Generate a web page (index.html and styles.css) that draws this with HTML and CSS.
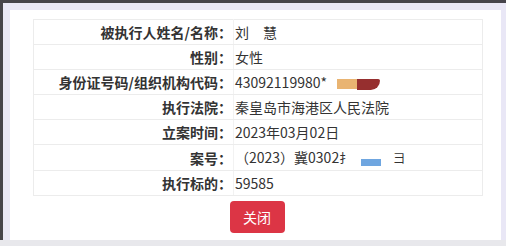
FILE: index.html
```html
<!DOCTYPE html>
<html lang="zh-CN">
<head>
<meta charset="utf-8">
<title>执行信息</title>
<link rel="stylesheet" href="styles.css">
</head>
<body>
<div class="frame">
  <div class="panel">
    <table class="info">
      <tr><th>被执行人姓名/名称：</th><td>刘<span class="gap"></span>慧</td></tr>
      <tr><th>性别：</th><td>女性</td></tr>
      <tr><th>身份证号码/组织机构代码：</th><td>43092119980*<span class="mask-a"></span><span class="mask-b"></span></td></tr>
      <tr><th>执行法院：</th><td>秦皇岛市海港区人民法院</td></tr>
      <tr><th>立案时间：</th><td>2023年03月02日</td></tr>
      <tr><th>案号：</th><td>（2023）冀0302<span class="part">扌</span><span class="mask-c"></span><span class="part tail">彐</span></td></tr>
      <tr><th>执行标的：</th><td>59585</td></tr>
    </table>
    <div class="actions"><button class="btn-close">关闭</button></div>
  </div>
</div>
</body>
</html>
```

FILE: styles.css
```css
html, body {
  margin: 0;
  padding: 0;
}
body {
  width: 506px;
  height: 246px;
  overflow: hidden;
  background: #e8e8ec;
  font-family: "Noto Sans CJK SC", "Microsoft YaHei", sans-serif;
  font-size: 14px;
  color: #333;
}
.frame {
  height: 230px;
  border-top: 3px solid #46444b;
  border-left: 3px solid #46444b;
  background: #e9e7f6;
  padding: 7px 5px 0 7px;
}
.panel {
  background: #fff;
  height: 230px;
  padding-top: 9px;
  padding-left: 23px;
  box-sizing: border-box;
}
.info {
  border-collapse: collapse;
  width: 450px;
  table-layout: fixed;
}
.info th, .info td {
  height: 24px;
  padding: 0;
  border: 1px solid #ececec;
  line-height: 24px;
  white-space: nowrap;
  overflow: hidden;
}
.info th {
  width: 198px;
  text-align: right;
  font-weight: bold;
  color: #333;
  padding-right: 1px;
  border-right-color: #f2f2f2;
}
.info td {
  text-align: left;
  padding-left: 1px;
}
.gap {
  display: inline-block;
  width: 14px;
}
.mask-a, .mask-b, .mask-c {
  display: inline-block;
  vertical-align: middle;
}
.mask-a {
  width: 20px;
  height: 10px;
  margin-left: 10px;
  background: #e9b472;
}
.mask-b {
  width: 23px;
  height: 11px;
  background: #962f2f;
  border-radius: 0 2px 10px 0;
}
.mask-c {
  width: 20px;
  height: 7px;
  margin-left: 10px;
  margin-top: 6px;
  background: #6fa6e0;
}
.part {
  font-size: 12px;
}
.tail {
  margin-left: 12px;
}
.actions {
  width: 450px;
  display: flex;
  justify-content: center;
  padding-top: 5px;
}
.btn-close {
  width: 55px;
  height: 32px;
  border: none;
  border-radius: 4px;
  background: #dc3545;
  color: #fff;
  font-family: "Noto Sans CJK SC", sans-serif;
  font-size: 14px;
  padding: 0;
  margin-left: -2px;
}
```
